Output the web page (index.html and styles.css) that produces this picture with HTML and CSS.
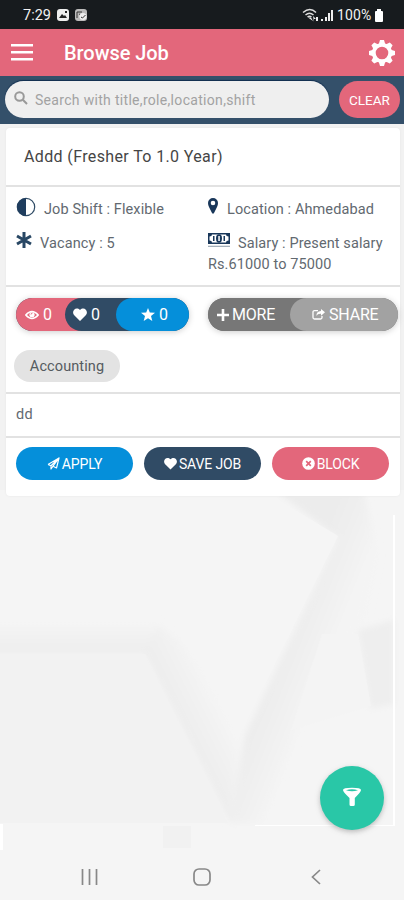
FILE: index.html
```html
<!DOCTYPE html>
<html lang="en">
<head>
<meta charset="utf-8">
<title>Browse Job</title>
<link rel="stylesheet" href="styles.css">
</head>
<body>
<div class="screen">
  <svg class="backdrop" viewBox="0 490 404 410" aria-hidden="true">
    <defs>
      <linearGradient id="band" x1="0" y1="0" x2="0" y2="1"><stop offset="0" stop-color="#f5f5f5"/><stop offset="1" stop-color="#ededed"/></linearGradient>
      <linearGradient id="slope" gradientUnits="userSpaceOnUse" x1="170" y1="705" x2="212" y2="684"><stop offset="0" stop-color="#ededed"/><stop offset="1" stop-color="#f5f5f5"/></linearGradient>
      <linearGradient id="rise" gradientUnits="userSpaceOnUse" x1="280" y1="650" x2="325" y2="668"><stop offset="0" stop-color="#ececec"/><stop offset="1" stop-color="#f4f4f4"/></linearGradient>
      <filter id="soft"><feGaussianBlur stdDeviation="3"/></filter>
    </defs>
    <path fill="#f5f5f5" d="M0 490h404v410H0z"/>
    <g filter="url(#soft)">
      <path fill="url(#band)" d="M-9 622h167l-9 32H-9z"/>
      <path fill="url(#slope)" d="M144 653l14-28 22 16 62 92-12 90z"/>
      <path fill="url(#rise)" d="M268 485h95l15 70-12 60-65 110-38 98h-33l15-87 93-198z"/>
      <path fill="#eee" d="M358 630l36-10v84l-24 5z"/>
    </g>
    <path fill="#f2f2f2" d="M0 654h145l83 169H0z"/>
    <path fill="#f5f5f5" d="M262 490l76 46-94 190-62-95 10-80z"/>
    <path fill="#f4f4f4" d="M322 634h36l13 72-80 24z"/>
    <path fill="#fff" d="M0 824h3v26H0zM393 515h2v310h-2zM255 825h140v1H255z"/>
    <path fill="#f1f1f1" d="M163 826h28v22h-28z"/>
  </svg>

  <header class="status">
    <span class="clock">7:29</span>
    <svg class="tray" viewBox="0 0 30 12"><rect x="0" y="0" width="12" height="12" rx="3" fill="#eee"/><path fill="#222" d="M2 9l3-4 2 2 1-1 2 3zM8 2h2v2H8z"/><rect x="18" y="0" width="12" height="12" rx="3" fill="#bbb"/><path d="M20 9V3h5M22 5l2 1" stroke="#333" fill="none"/><circle cx="26" cy="7.500" r="3.600" fill="#eee"/><path d="M24 8l1.500 1 3-3" stroke="#333" fill="none"/></svg>
    <svg class="signal" viewBox="0 0 32 14"><g fill="none" stroke="#ddd" stroke-width="1.500"><path d="M1 4.500q7-6 13 0M3.500 7q4-3.500 8 0M5.500 9q2-1.500 4 0"/></g><path fill="#eee" d="M6 9.500h3L11 13zM11 8l3 3h-2v3zM14 9h2v4h-2zM19 11h2v2h-2zM23 9h2v4h-2zM26 5h2v8h-2zM29 2h2v11h-2z"/></svg>
    <span class="charge">100%</span>
    <svg class="battery" viewBox="0 0 10 13"><path fill="#fff" d="M3 0h4v2h1q1 0 1 1v9q0 1-1 1H2q-1 0-1-1V3q0-1 1-1h1z"/></svg>
  </header>

  <nav class="appbar">
    <svg class="menu" viewBox="0 0 22 17"><path fill="#fff" d="M0 0h22v2.400H0zM0 7h22v2.400H0zM0 14h22v2.400H0z"/></svg>
    <h1>Browse Job</h1>
    <svg class="gear" viewBox="-13 -13 26 26"><g fill="#fff"><path id="t" d="M-3.500-8l1.500-5h4l1.500 5zM-3.500 8l1.500 5h4l1.500-5z"/><use href="#t" transform="rotate(45)"/><use href="#t" transform="rotate(90)"/><use href="#t" transform="rotate(135)"/></g><circle r="8.200" fill="none" stroke="#fff" stroke-width="3.800"/></svg>
  </nav>

  <div class="searchbar">
    <div class="field">
      <svg viewBox="0 0 14 14"><g fill="none" stroke="#999" stroke-width="2"><circle cx="5.500" cy="5.500" r="4.300"/><path d="M8.800 8.800L13 13"/></g></svg>
      <span>Search with title,role,location,shift</span>
    </div>
    <button class="clear"><span>CLEAR</span></button>
  </div>

  <main class="card">
    <h2><span>Addd (Fresher To 1.0 Year)</span></h2>
    <section class="details">
      <p><svg class="half" viewBox="0 0 20 20"><circle cx="10" cy="10" r="8.700" fill="#fff" stroke="#304c66" stroke-width="1.200"/><path fill="#1f3d5e" d="M10 1a9 9 0 0 0 0 18z"/></svg><span class="shift">Job Shift : Flexible</span></p>
      <p><svg class="pin" viewBox="0 0 10 16"><path fill="#19375a" fill-rule="evenodd" d="M5 0a5 5 0 0 1 5 5q0 2-1 4l-3 6q-1 1.500-2 0L1 9Q0 7 0 5a5 5 0 0 1 5-5m0 2.700a2.300 2.300 0 1 0 0 4.600 2.300 2.300 0 0 0 0-4.600"/></svg><span class="place">Location : Ahmedabad</span></p>
      <p><svg class="aster" viewBox="0 0 16 16"><path stroke="#284764" stroke-width="3" d="M8 0v16M1 4l14 8M1 12l14-8"/></svg><span class="vacancy">Vacancy : 5</span></p>
      <p><svg class="cash" viewBox="0 0 22 14"><path fill="#19375a" d="M0 0h22v11H0z"/><path fill="#fff" d="M4 1.500h14q0 2 2.500 2v4q-2.500 0-2.500 2H4q0-2-2.500-2v-4q2.500 0 2.500-2"/><path fill="#19375a" d="M5 3h1.500v5H5zM15.500 3H17v5h-1.500z"/><ellipse cx="11" cy="5.500" rx="3" ry="4.200" fill="#19375a"/><path fill="#fff" d="M10.300 3h1.500v5h-1.500z"/><path fill="#a3afba" d="M0 12.700h22V14H0z"/></svg><span class="salary">Salary : Present salary</span><span class="range">Rs.61000 to 75000</span></p>
    </section>
    <section class="stats">
      <div class="pills">
        <div class="pill counters">
          <span class="seg views"><svg viewBox="0 0 14 10"><path d="M.8 5q6.200-7 12.400 0-6.200 7-12.400 0z" fill="none" stroke="#fff" stroke-width="1.600"/><circle cx="7" cy="4.700" r="2.600" fill="#fff"/><path d="M6 4.500q0-1.500 1.500-1.500" stroke="#e3677c" fill="none"/></svg><b>0</b></span>
          <span class="seg likes"><svg viewBox="0 0 14 13"><path fill="#fff" d="M7 13L1 7C-2 3 3-2 7 2c4-4 9 1 6 5z"/></svg><b>0</b></span>
          <span class="seg stars"><svg viewBox="0 0 14 13"><path fill="#fff" d="M7 0l1.800 4.500 5.200.3-4 3.300L11.300 13 7 10.300 2.700 13 4 8.100 0 4.800l5.200-.3z"/></svg><b>0</b></span>
        </div>
        <div class="pill actions">
          <span class="seg more"><svg viewBox="0 0 12 12"><path stroke="#fff" stroke-width="2.600" d="M6 0v12M0 6h12"/></svg><b>MORE</b></span>
          <span class="seg share"><svg viewBox="0 0 13 11"><path d="M6 1.700H2.500Q1 1.700 1 3v5.500Q1 10 2.500 10h6Q10 10 10 8.500V7" fill="none" stroke="#fff" stroke-width="1.300"/><path fill="#fff" d="M9 0l4 3.300-4 3.400v-2Q5.500 4.400 4.500 7 4 2.300 9 2z"/></svg><b>SHARE</b></span>
        </div>
      </div>
      <span class="tag"><span>Accounting</span></span>
    </section>
    <section class="note">dd</section>
    <section class="buttons">
      <button class="apply"><svg viewBox="0 0 13 13"><path d="M1 7.500L12 1 9.500 11 6 9.200 4 12V8.700L12 1 6 9.200M1 7.500l3 1.200" fill="none" stroke="#fff" stroke-width="1.200" stroke-linejoin="round"/></svg><span>APPLY</span></button>
      <button class="save"><svg viewBox="0 0 14 13"><path fill="#fff" d="M7 13L1 7C-2 3 3-2 7 2c4-4 9 1 6 5z"/></svg><span>SAVE JOB</span></button>
      <button class="block"><svg viewBox="0 0 13 13"><circle cx="6.500" cy="6.500" r="6.300" fill="#fff"/><path d="M4.200 4.200l4.600 4.600M8.800 4.200L4.200 8.800" stroke="#e3677c" stroke-width="1.700"/></svg><span>BLOCK</span></button>
    </section>
  </main>

  <div class="fab"><svg viewBox="0 0 20 20"><path fill="#fff" fill-rule="evenodd" d="M1 3Q1 .7 10 .7T19 3q0 1.800-6.200 8v6.500q0 1.500-1.500 1.500H9q-1.500 0-1.500-1.500V11Q1 4.800 1 3m3 .2q6 2.200 12 0Q10 1.300 4 3.200"/></svg></div>

  <footer class="softkeys">
    <svg class="recent" viewBox="0 0 17 16"><path stroke="#888" stroke-width="1.700" d="M1.500 0v16M8.500 0v16M15.500 0v16"/></svg>
    <svg class="home" viewBox="0 0 18 18"><rect x="1" y="1" width="16" height="16" rx="5" fill="none" stroke="#888" stroke-width="1.700"/></svg>
    <svg class="back" viewBox="0 0 10 16"><path d="M9 1L1.500 8 9 15" fill="none" stroke="#888" stroke-width="1.700"/></svg>
  </footer>
</div>
</body>
</html>
```
FILE: styles.css
```css
* { box-sizing: border-box; }
body { margin: 0; font-family: Roboto, "Liberation Sans", sans-serif; }
h1, h2, p { margin: 0; font-weight: 400; }
button { border: 0; padding: 0; font: inherit; color: #fff; }
svg { display: block; flex: none; }
span, b { white-space: nowrap; }

.screen { position: relative; display: flex; flex-direction: column; width: 404px; height: 900px; overflow: hidden; background: #f2f2f2; }
.backdrop { position: absolute; left: 0; bottom: 0; width: 404px; height: 410px; }

.status { display: flex; align-items: center; height: 29px; padding: 1px 20px 0 23px; background: #171b1e; color: #f2f2f2; font-size: 14px; }
.clock { width: 34px; font-size: 14.5px; }
.tray { width: 30px; height: 12px; }
.signal { width: 32px; height: 14px; margin-left: auto; }
.charge { margin-left: 3px; width: 37px; letter-spacing: .1px; }
.battery { width: 10px; height: 13px; }

.appbar { display: flex; align-items: center; height: 47px; padding: 0 9px 0 11px; background: #e3677b; color: #fff; }
.menu { width: 22px; height: 17px; }
h1 { margin-left: 31px; font-size: 20px; font-weight: 500; line-height: 24px; letter-spacing: -.05px; }
.gear { width: 26px; height: 26px; margin-left: auto; }

.searchbar { display: flex; gap: 10px; height: 48px; padding: 5px 4px 6px 5px; background: #34506a; }
.field { display: flex; align-items: center; gap: 7px; width: 324px; height: 37px; padding-left: 9px; border-radius: 19px; background: #efefef; color: #a2a2a2; font-size: 14px; box-shadow: 0 -1px 1px #102d4f; letter-spacing: .31px; }
.field svg { width: 14px; height: 14px; margin-top: -3px; }
.clear { width: 61px; height: 37px; border-radius: 19px; background: #e3677b; font-size: 13.5px; }

.card { position: relative; width: 394px; height: 368px; margin: 4px 0 0 6px; background: #fff; border-radius: 4px; color: #626970; box-shadow: 0 0 2px #e5e5e5; }
h2 { height: 59px; padding: 18px 0 0 18px; border-bottom: 2px solid #e2e2e2; color: #454545; font-size: 16px; line-height: 22px; letter-spacing: .37px; }
.details { display: grid; grid-template-columns: 192px 1fr; grid-template-rows: 34px 1fr; height: 100px; padding: 10px 0 0 10px; border-bottom: 2px solid #e2e2e2; font-size: 14.5px; line-height: 22px; letter-spacing: .1px; }
.details p { display: flex; flex-wrap: wrap; align-items: flex-start; align-content: flex-start; padding-top: 2px; }
.half { width: 20px; height: 20px; margin: -2px 8px 0 0; }
.pin { width: 10px; height: 16px; margin: -1px 9px 0 0; }
.aster { width: 16px; height: 16px; margin: -1px 8px 0 0; }
.cash { width: 22px; height: 14px; margin: 0 8px 0 0; }
.range { flex-basis: 100%; margin-top: -1px; }

.stats { height: 107px; padding: 11px 0 0 10px; border-bottom: 2px solid #e2e2e2; }
.pills { display: flex; gap: 19px; }
.pill { display: flex; height: 33px; border-radius: 17px; box-shadow: 0 1px 6px #ccc; color: #fff; font-size: 16px; }
.seg { display: flex; align-items: center; height: 33px; border-radius: 17px; }
.seg b { font-weight: 400; }
.counters { width: 173px; background: #304b65; }
.views { width: 67px; padding-left: 9px; gap: 4px; border-radius: 17px 0 0 17px; background: #e3677b; }
.likes { width: 68px; margin-left: -18px; padding-left: 8px; gap: 4px; background: #304b65; }
.stars { width: 73px; margin-left: -17px; padding-left: 25px; gap: 4px; background: #058fda; }
.views svg { width: 14px; height: 10px; }
.likes svg, .stars svg { width: 14px; height: 13px; }
.actions { width: 190px; background: #777; }
.more { width: 99px; padding-left: 9px; gap: 3px; background: #777; }
.more svg { width: 12px; height: 12px; }
.more b, .share b { letter-spacing: -.2px; }
.share { width: 108px; margin-left: -17px; padding-left: 22px; gap: 4px; background: #a2a2a2; }
.share svg { width: 13px; height: 11px; }
.tag { display: flex; align-items: center; justify-content: center; width: 106px; height: 32px; margin: 19px 0 0 -2px; border-radius: 16px; background: #e3e3e3; color: #555b60; font-size: 14.5px; letter-spacing: .1px; }
.note { height: 44px; padding: 10px; border-bottom: 2px solid #e2e2e2; font-size: 14.5px; line-height: 22px; letter-spacing: .2px; }
.buttons { display: flex; gap: 11px; padding: 9px 10px; }
.buttons button { display: flex; align-items: center; justify-content: center; gap: 2px; width: 117px; height: 33px; border-radius: 17px; font-size: 14px; letter-spacing: -.15px; }
.buttons svg { width: 13px; height: 13px; }
.buttons .apply { background: #058fda; }
.buttons .save { background: #304b65; }
.buttons .block { background: #e3677b; }

.fab { position: absolute; left: 320px; top: 766px; display: grid; place-items: center; width: 64px; height: 64px; border-radius: 50%; background: #29c7a7; box-shadow: 0 2px 5px #8888; }
.fab svg { width: 20px; height: 20px; margin-top: -2px; }

.softkeys { position: relative; display: flex; align-items: center; height: 48px; margin-top: auto; padding: 1px 0 0 81px; }
.recent { width: 17px; height: 16px; }
.home { width: 18px; height: 18px; margin-left: 95px; }
.back { width: 10px; height: 16px; margin-left: 100px; }
```
